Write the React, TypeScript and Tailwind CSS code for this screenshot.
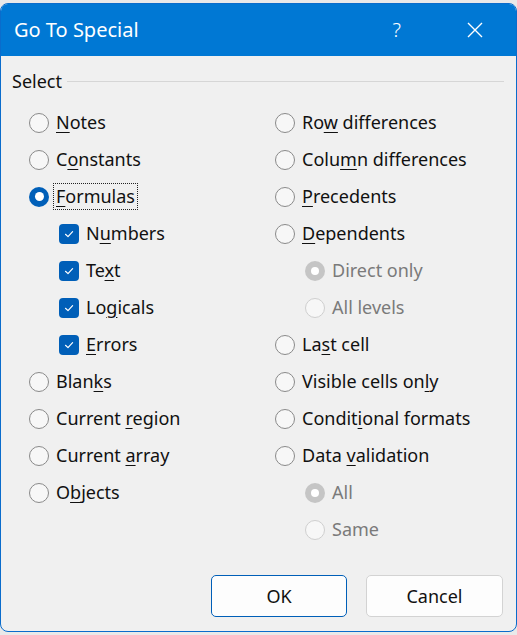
import React from 'react';

type Item = {
  label: string;
  key: number; // index of underlined letter, -1 for none
  kind: 'radio' | 'check';
  checked?: boolean;
  disabled?: boolean;
  indent?: boolean;
  focus?: boolean;
};

const leftItems: Item[] = [
  { label: 'Notes', key: 0, kind: 'radio' },
  { label: 'Constants', key: 1, kind: 'radio' },
  { label: 'Formulas', key: 0, kind: 'radio', checked: true, focus: true },
  { label: 'Numbers', key: 1, kind: 'check', checked: true, indent: true },
  { label: 'Text', key: 2, kind: 'check', checked: true, indent: true },
  { label: 'Logicals', key: 2, kind: 'check', checked: true, indent: true },
  { label: 'Errors', key: 0, kind: 'check', checked: true, indent: true },
  { label: 'Blanks', key: 4, kind: 'radio' },
  { label: 'Current region', key: 8, kind: 'radio' },
  { label: 'Current array', key: 8, kind: 'radio' },
  { label: 'Objects', key: 1, kind: 'radio' },
];

const rightItems: Item[] = [
  { label: 'Row differences', key: 2, kind: 'radio' },
  { label: 'Column differences', key: 4, kind: 'radio' },
  { label: 'Precedents', key: 0, kind: 'radio' },
  { label: 'Dependents', key: 0, kind: 'radio' },
  { label: 'Direct only', key: -1, kind: 'radio', checked: true, disabled: true, indent: true },
  { label: 'All levels', key: -1, kind: 'radio', disabled: true, indent: true },
  { label: 'Last cell', key: 2, kind: 'radio' },
  { label: 'Visible cells only', key: 16, kind: 'radio' },
  { label: 'Conditional formats', key: 6, kind: 'radio' },
  { label: 'Data validation', key: 5, kind: 'radio' },
  { label: 'All', key: -1, kind: 'radio', checked: true, disabled: true, indent: true },
  { label: 'Same', key: -1, kind: 'radio', disabled: true, indent: true },
];

function Label({ text, k }: { text: string; k: number }) {
  if (k < 0) return <>{text}</>;
  return (
    <>
      {text.slice(0, k)}
      <u className="underline-offset-[3px] decoration-1">{text[k]}</u>
      {text.slice(k + 1)}
    </>
  );
}

function Radio({ checked, disabled }: { checked?: boolean; disabled?: boolean }) {
  if (checked && disabled) {
    return (
      <span className="w-[20px] h-[20px] rounded-full bg-[#c5c5c5] flex items-center justify-center shrink-0">
        <span className="w-[8px] h-[8px] rounded-full bg-white" />
      </span>
    );
  }
  if (checked) {
    return (
      <span className="w-[20px] h-[20px] rounded-full bg-[#005fb8] flex items-center justify-center shrink-0">
        <span className="w-[9px] h-[9px] rounded-full bg-white" />
      </span>
    );
  }
  return (
    <span
      className={
        disabled
          ? 'w-[20px] h-[20px] rounded-full border border-[#cfcfcf] bg-[#f7f7f7] shrink-0'
          : 'w-[20px] h-[20px] rounded-full border border-[#8a8a8a] bg-[#f7f7f7] shrink-0'
      }
    />
  );
}

function Check() {
  return (
    <span className="w-[20px] h-[20px] rounded-[4px] bg-[#005fb8] flex items-center justify-center shrink-0">
      <svg width="12" height="12" viewBox="0 0 12 12" fill="none">
        <path d="M2.5 6.3 L5 8.6 L9.6 3.6" stroke="white" strokeWidth="1.2" strokeLinecap="round" strokeLinejoin="round" />
      </svg>
    </span>
  );
}

function Row({ item }: { item: Item }) {
  return (
    <div className={`h-[37px] flex items-center ${item.indent ? 'pl-[30px]' : ''}`}>
      {item.kind === 'radio' ? <Radio checked={item.checked} disabled={item.disabled} /> : <Check />}
      <span
        className={`leading-[25px] ${item.disabled ? 'text-[#7a7a7a]' : 'text-[#111]'} ${
          item.focus ? 'ml-[5px] px-[2px] outline outline-1 outline-dotted outline-[#222]' : 'ml-[7px]'
        }`}
      >
        <Label text={item.label} k={item.key} />
      </span>
    </div>
  );
}

export default function App() {
  return (
    <div
      className="w-[517px] h-[635px] bg-[#e9e9e9] pt-[3px] pb-[3px] text-[18px]"
      style={{ fontFamily: '"Noto Sans", "Open Sans", sans-serif' }}
    >
      <div className="h-full flex flex-col rounded-[8px] border border-[#0a6ccc] bg-[#f0f0f0] overflow-hidden">
        {/* Title bar */}
        <div className="h-[52px] bg-[#0078d4] flex items-center text-white shrink-0">
          <span className="ml-[13px] text-[20px]">Go To Special</span>
          <span className="ml-auto text-[20px] font-light mr-[66px]">?</span>
          <svg className="mr-[33px]" width="16" height="16" viewBox="0 0 16 16">
            <path d="M1 1 L15 15 M15 1 L1 15" stroke="white" strokeWidth="1.4" />
          </svg>
        </div>

        {/* Body */}
        <div className="flex-1 flex flex-col">
          <div className="mt-[15px] h-[20px] flex items-center pl-[11px] pr-[12px]">
            <span className="text-[#111]">Select</span>
            <span className="ml-[5px] flex-1 h-px bg-[#d6d6d6]" />
          </div>

          <div className="mt-[13px] flex pl-[28px]">
            <div className="w-[246px] flex flex-col">
              {leftItems.map((it) => (
                <Row key={it.label} item={it} />
              ))}
            </div>
            <div className="flex flex-col">
              {rightItems.map((it) => (
                <Row key={it.label} item={it} />
              ))}
            </div>
          </div>

          <div className="mt-[27px] flex justify-end gap-[19px] pr-[13px]">
            <button className="w-[136px] h-[42px] rounded-[5px] border border-[#005fb8] bg-[#fdfdfd] text-[#111]">
              OK
            </button>
            <button className="w-[137px] h-[42px] rounded-[5px] border border-[#d3d3d3] bg-[#fdfdfd] text-[#111]">
              Cancel
            </button>
          </div>
        </div>
      </div>
    </div>
  );
}
